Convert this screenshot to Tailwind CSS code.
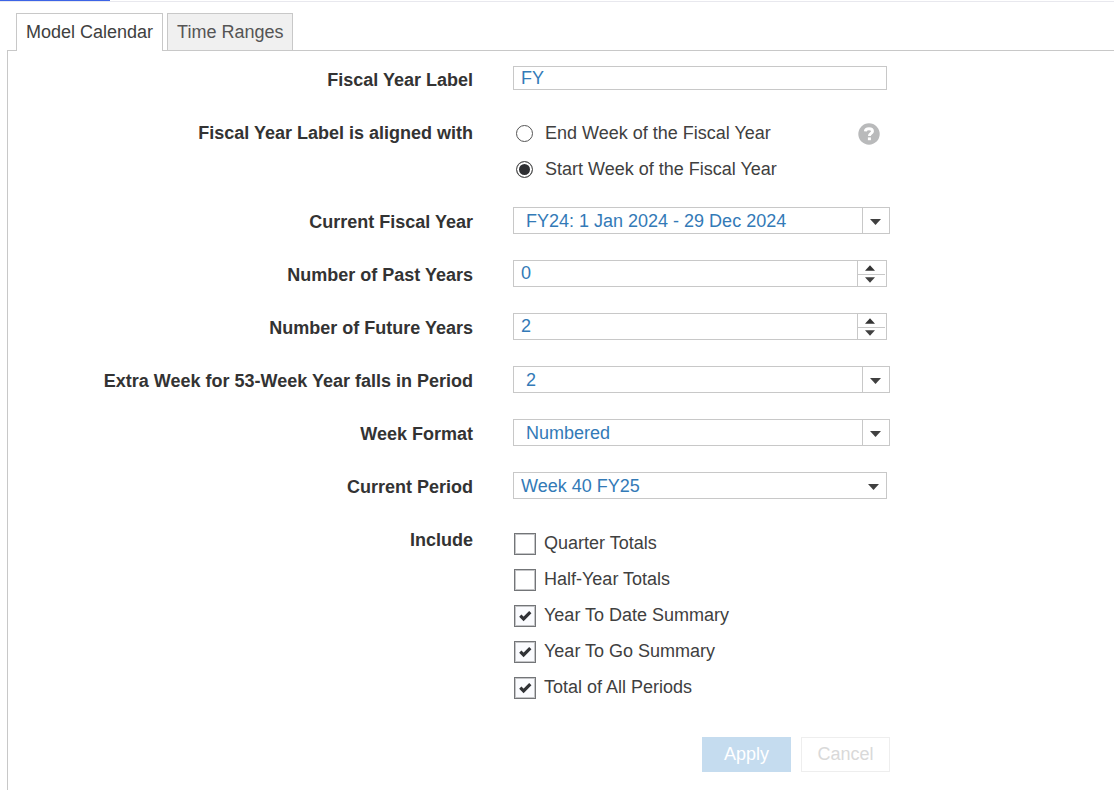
<!DOCTYPE html>
<html lang="en">
<head>
<meta charset="utf-8">
<meta name="viewport" content="width=device-width, initial-scale=1">
<title>Model Calendar</title>
<script src="https://cdn.jsdelivr.net/npm/@tailwindcss/browser@4"></script>
</head>
<body class="flex min-h-screen flex-col bg-white font-['Liberation_Sans',Arial,sans-serif] text-[18px] text-[#404040]">
  <div class="border-b border-[#e8e8ee]"><div class="h-px w-[110px] bg-[#3c64e6]"></div></div>

  <div role="tablist" class="relative z-10 -mb-px flex gap-1 px-4 pt-[11px]">
    <button role="tab" aria-selected="true" class="h-[38px] border border-b-0 border-[#c8c8c8] bg-white px-[9px] text-[#404040]">Model Calendar</button>
    <button role="tab" aria-selected="false" class="h-[38px] border border-[#c8c8c8] bg-[#f0f0f0] px-[9px] text-[#555555]">Time Ranges</button>
  </div>

  <main class="ml-[7px] flex-1 border-t border-l border-[#c8c8c8] pt-[14px] pb-4">
    <form class="grid grid-cols-[minmax(0,465px)_minmax(0,377px)] gap-x-10 gap-y-[23px]">
      <label for="fy-label" class="pt-0.5 text-right leading-[27px] font-bold text-[#333333]">Fiscal Year Label</label>
      <div class="h-[30px] pt-px pr-[3px]">
        <input id="fy-label" type="text" value="FY" class="block h-6 w-full border border-[#c8c8c8] bg-white px-[7px] text-[#337ab7]">
      </div>

      <div id="align-label" class="pt-0.5 text-right leading-[27px] font-bold text-[#333333]">Fiscal Year Label is aligned with</div>
      <div class="flex items-start justify-between pr-2.5">
        <div role="radiogroup" aria-labelledby="align-label" class="flex flex-col gap-1.5">
          <label class="flex h-[30px] items-center gap-3 pl-[3px]">
            <input type="radio" name="align" class="size-[17px] appearance-none rounded-full border border-[#555555] bg-white checked:bg-[#2f3033] checked:shadow-[inset_0_0_0_2px_white]">End Week of the Fiscal Year</label>
          <label class="flex h-[30px] items-center gap-3 pl-[3px]">
            <input type="radio" name="align" checked class="size-[17px] appearance-none rounded-full border border-[#555555] bg-white checked:bg-[#2f3033] checked:shadow-[inset_0_0_0_2px_white]">Start Week of the Fiscal Year</label>
        </div>
        <button type="button" aria-label="Help" class="mt-[5px]">
          <svg class="block size-[22px]" viewBox="0 0 22 22"><circle cx="11" cy="11" r="10.7" fill="#b9babb"/><path d="M7.300 8.300C7.500 6.300 9 5.700 11 5.700c2.200 0 3.500.9 3.500 2.500 0 2.200-3.100 2.200-3.100 4.800" fill="none" stroke="#fff" stroke-width="2.900"/><rect x="9.900" y="14.400" width="3" height="2.800" fill="#fff"/></svg>
        </button>
      </div>

      <label for="current-fy" class="pt-0.5 text-right leading-[27px] font-bold text-[#333333]">Current Fiscal Year</label>
      <div class="h-[30px]">
        <div class="relative">
          <select id="current-fy" class="block h-[27px] w-full appearance-none border border-[#c8c8c8] bg-white pr-8 pb-[3px] pl-3 text-[#337ab7]"><option>FY24: 1 Jan 2024 - 29 Dec 2024</option></select>
          <span class="pointer-events-none absolute inset-y-0 right-0 flex w-7 items-center justify-center border-l border-[#c8c8c8] pt-[3px] pr-0.5"><svg class="h-[6px] w-[11px]" viewBox="0 0 11 6"><path d="M0 0h11L5.500 6z" fill="#404040"/></svg></span>
        </div>
      </div>

      <label for="past" class="pt-0.5 text-right leading-[27px] font-bold text-[#333333]">Number of Past Years</label>
      <div class="h-[30px] pr-[3px]">
        <div class="flex h-[27px] border border-[#c8c8c8]">
          <input id="past" type="number" value="0" class="w-full min-w-0 flex-1 [appearance:textfield] bg-white px-[7px] text-[#337ab7]">
          <div class="flex w-[29px] flex-col border-l border-[#c8c8c8] pr-px">
            <button type="button" aria-label="Increase past years" class="flex h-[14px] items-center justify-center border-b border-[#c8c8c8] pr-[3px]"><svg class="h-[6px] w-[10px]" viewBox="0 0 11 6"><path d="M5.500 0L11 6H0z" fill="#333"/></svg></button>
            <button type="button" aria-label="Decrease past years" class="flex flex-1 items-start justify-center pt-0.5 pr-[3px]"><svg class="h-[6px] w-[10px]" viewBox="0 0 11 6"><path d="M0 0h11L5.500 6z" fill="#404040"/></svg></button>
          </div>
        </div>
      </div>

      <label for="future" class="pt-0.5 text-right leading-[27px] font-bold text-[#333333]">Number of Future Years</label>
      <div class="h-[30px] pr-[3px]">
        <div class="flex h-[27px] border border-[#c8c8c8]">
          <input id="future" type="number" value="2" class="w-full min-w-0 flex-1 [appearance:textfield] bg-white px-[7px] text-[#337ab7]">
          <div class="flex w-[29px] flex-col border-l border-[#c8c8c8] pr-px">
            <button type="button" aria-label="Increase future years" class="flex h-[14px] items-center justify-center border-b border-[#c8c8c8] pr-[3px]"><svg class="h-[6px] w-[10px]" viewBox="0 0 11 6"><path d="M5.500 0L11 6H0z" fill="#333"/></svg></button>
            <button type="button" aria-label="Decrease future years" class="flex flex-1 items-start justify-center pt-0.5 pr-[3px]"><svg class="h-[6px] w-[10px]" viewBox="0 0 11 6"><path d="M0 0h11L5.500 6z" fill="#404040"/></svg></button>
          </div>
        </div>
      </div>

      <label for="extra-week" class="pt-0.5 text-right leading-[27px] font-bold text-[#333333]">Extra Week for 53-Week Year falls in Period</label>
      <div class="h-[30px]">
        <div class="relative">
          <select id="extra-week" class="block h-[27px] w-full appearance-none border border-[#c8c8c8] bg-white pr-8 pb-[3px] pl-3 text-[#337ab7]"><option>2</option></select>
          <span class="pointer-events-none absolute inset-y-0 right-0 flex w-7 items-center justify-center border-l border-[#c8c8c8] pt-[3px] pr-0.5"><svg class="h-[6px] w-[11px]" viewBox="0 0 11 6"><path d="M0 0h11L5.500 6z" fill="#404040"/></svg></span>
        </div>
      </div>

      <label for="week-format" class="pt-0.5 text-right leading-[27px] font-bold text-[#333333]">Week Format</label>
      <div class="h-[30px]">
        <div class="relative">
          <select id="week-format" class="block h-[27px] w-full appearance-none border border-[#c8c8c8] bg-white pr-8 pb-[3px] pl-3 text-[#337ab7]"><option>Numbered</option></select>
          <span class="pointer-events-none absolute inset-y-0 right-0 flex w-7 items-center justify-center border-l border-[#c8c8c8] pt-[3px] pr-0.5"><svg class="h-[6px] w-[11px]" viewBox="0 0 11 6"><path d="M0 0h11L5.500 6z" fill="#404040"/></svg></span>
        </div>
      </div>

      <label for="current-period" class="pt-0.5 text-right leading-[27px] font-bold text-[#333333]">Current Period</label>
      <div class="h-[30px] pr-[3px]">
        <div class="relative">
          <select id="current-period" class="block h-[27px] w-full appearance-none border border-[#c8c8c8] bg-white pr-8 pb-[3px] pl-[7px] text-[#337ab7]"><option>Week 40 FY25</option></select>
          <span class="pointer-events-none absolute inset-y-0 right-0 flex w-7 items-center justify-center pt-[3px]"><svg class="h-[6px] w-[11px]" viewBox="0 0 11 6"><path d="M0 0h11L5.500 6z" fill="#404040"/></svg></span>
        </div>
      </div>

      <div id="include-label" class="pt-0.5 text-right leading-[27px] font-bold text-[#333333]">Include</div>
      <div role="group" aria-labelledby="include-label" class="flex flex-col items-start gap-1.5 pt-[3px] pb-px">
        <label class="flex h-[30px] items-center gap-2 pl-px">
          <span class="mt-0.5 grid size-[22px]"><input type="checkbox" class="peer col-start-1 row-start-1 size-[22px] appearance-none border border-[#737578] bg-white shadow-[inset_0_0_0_1px_#c4c5c7]"><svg class="pointer-events-none invisible col-start-1 row-start-1 size-[22px] peer-checked:visible" viewBox="0 0 22 22"><path d="M6.300 10.600l3.300 3.300 6.700-6.700" fill="none" stroke="#303236" stroke-width="3.200"/></svg></span>Quarter Totals</label>
        <label class="flex h-[30px] items-center gap-2 pl-px">
          <span class="mt-0.5 grid size-[22px]"><input type="checkbox" class="peer col-start-1 row-start-1 size-[22px] appearance-none border border-[#737578] bg-white shadow-[inset_0_0_0_1px_#c4c5c7]"><svg class="pointer-events-none invisible col-start-1 row-start-1 size-[22px] peer-checked:visible" viewBox="0 0 22 22"><path d="M6.300 10.600l3.300 3.300 6.700-6.700" fill="none" stroke="#303236" stroke-width="3.200"/></svg></span>Half-Year Totals</label>
        <label class="flex h-[30px] items-center gap-2 pl-px">
          <span class="mt-0.5 grid size-[22px]"><input type="checkbox" checked class="peer col-start-1 row-start-1 size-[22px] appearance-none border border-[#737578] bg-[#fafbfe] shadow-[inset_0_0_0_1px_#c4c5c7]"><svg class="pointer-events-none invisible col-start-1 row-start-1 size-[22px] peer-checked:visible" viewBox="0 0 22 22"><path d="M6.300 10.600l3.300 3.300 6.700-6.700" fill="none" stroke="#303236" stroke-width="3.200"/></svg></span>Year To Date Summary</label>
        <label class="flex h-[30px] items-center gap-2 pl-px">
          <span class="mt-0.5 grid size-[22px]"><input type="checkbox" checked class="peer col-start-1 row-start-1 size-[22px] appearance-none border border-[#737578] bg-[#fafbfe] shadow-[inset_0_0_0_1px_#c4c5c7]"><svg class="pointer-events-none invisible col-start-1 row-start-1 size-[22px] peer-checked:visible" viewBox="0 0 22 22"><path d="M6.300 10.600l3.300 3.300 6.700-6.700" fill="none" stroke="#303236" stroke-width="3.200"/></svg></span>Year To Go Summary</label>
        <label class="flex h-[30px] items-center gap-2 pl-px">
          <span class="mt-0.5 grid size-[22px]"><input type="checkbox" checked class="peer col-start-1 row-start-1 size-[22px] appearance-none border border-[#737578] bg-[#fafbfe] shadow-[inset_0_0_0_1px_#c4c5c7]"><svg class="pointer-events-none invisible col-start-1 row-start-1 size-[22px] peer-checked:visible" viewBox="0 0 22 22"><path d="M6.300 10.600l3.300 3.300 6.700-6.700" fill="none" stroke="#303236" stroke-width="3.200"/></svg></span>Total of All Periods</label>
      </div>

      <div class="col-start-2 flex justify-end gap-2.5 pt-[11px]">
        <button type="submit" disabled class="h-[35px] w-[89px] bg-[#c5dcef] text-white">Apply</button>
        <button type="button" disabled class="h-[35px] w-[89px] border border-[#eeeeee] bg-white text-[#d9d9d9]">Cancel</button>
      </div>
    </form>
  </main>
</body>
</html>
